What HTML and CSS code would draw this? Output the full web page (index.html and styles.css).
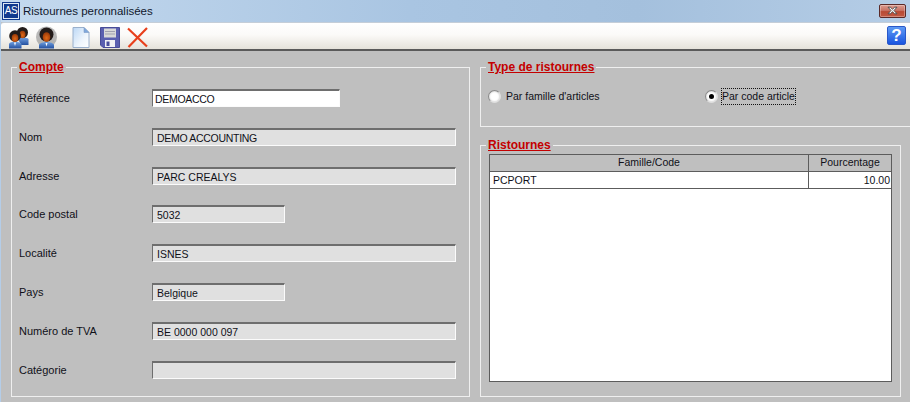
FILE: index.html
```html
<!DOCTYPE html>
<html lang="fr">
<head>
<meta charset="utf-8">
<title>Ristournes peronnalisées</title>
<link rel="stylesheet" href="styles.css">
</head>
<body>
<div class="window">
  <header class="titlebar">
    <span class="logo">AS</span>
    <span class="title">Ristournes peronnalisées</span>
    <span class="close">
      <svg width="13" height="9" viewBox="0 0 13 9"><path d="M2 1.2h2.3l2.2 2 2.2-2H11L8 4.500l3 3.300H8.700L6.500 5.800l-2.200 2H2l3-3.300z" fill="#f4f4f4" stroke="#4a4a4a" stroke-width=".9"/></svg>
    </span>
  </header>
  <nav class="toolbar">
    <svg class="ico people" width="21" height="23" viewBox="0 0 21 23">
      <defs>
        <radialGradient id="sk" cx=".5" cy=".6" r=".6"><stop offset="0" stop-color="#e06a18"/><stop offset="1" stop-color="#983808"/></radialGradient>
        <linearGradient id="bl" x1="0" y1="0" x2="0" y2="1"><stop offset="0" stop-color="#6f9fe0"/><stop offset="1" stop-color="#24509f"/></linearGradient>
      </defs>
      <path d="M10 13c1-2 9-2 10.500 0v6H13z" fill="url(#bl)"/>
      <circle cx="14.500" cy="6.500" r="5.500" fill="#231c1a"/>
      <ellipse cx="14.500" cy="8.500" rx="3" ry="3.800" fill="url(#sk)"/>
      <path d="M1 18c.5-3 11-3 12.500 0v4.500H1z" fill="url(#bl)"/>
      <circle cx="7" cy="10" r="5.800" fill="#231c1a"/>
      <ellipse cx="7" cy="12" rx="3.300" ry="4" fill="url(#sk)"/>
      <path d="M6 16.500l1 3.500 1-3.500z" fill="#fff"/>
    </svg>
    <svg class="ico person" width="21" height="23" viewBox="0 0 21 23">
      <circle cx="10.500" cy="11" r="10.500" fill="#8c8c8c" opacity=".6"/>
      <path d="M3 19c1-4 14-4 15 0v3.500H3z" fill="url(#bl)"/>
      <circle cx="10.500" cy="8.500" r="7" fill="#231c1a"/>
      <ellipse cx="10.500" cy="11" rx="3.800" ry="4.800" fill="url(#sk)"/>
      <path d="M9.500 17l1 3.500 1-3.500z" fill="#fff"/>
    </svg>
    <svg class="ico doc" width="18" height="21" viewBox="0 0 18 21">
      <defs><linearGradient id="dc" x1="0" y1="0" x2="1" y2="1"><stop offset="0" stop-color="#bcd8f6"/><stop offset=".6" stop-color="#eef5fc"/><stop offset="1" stop-color="#fff"/></linearGradient></defs>
      <path d="M1 .5h11l5 5v15H1z" fill="url(#dc)" stroke="#9ab0cc"/>
      <path d="M12 .5v5h5z" fill="#7fa8dc" stroke="#7d9cc8" stroke-width=".6"/>
    </svg>
    <svg class="ico save" width="20" height="21" viewBox="0 0 20 21">
      <path d="M.5.5h19v20H3l-2.500-2.500z" fill="#5a5fb0" stroke="#484c98"/>
      <rect x="4" y="1.500" width="12" height="9" fill="#d8d8d8"/>
      <path d="M5 4.500h10M5 7h10" stroke="#a0a0b0"/>
      <rect x="5" y="13" width="10" height="7" fill="#f0f0f4"/>
      <rect x="6.500" y="14.500" width="3" height="4.500" fill="#4a4f9c"/>
    </svg>
    <svg class="ico cross" width="21" height="21" viewBox="0 0 21 21">
      <path d="M1 1.500l19 18M20 1l-18.500 19" stroke="#e8401c" stroke-width="2.200" fill="none"/>
    </svg>
    <span class="help">?</span>
  </nav>
  <main class="content">
    <fieldset class="group compte">
      <legend>Compte</legend>
      <div class="field"><label>Référence</label><span class="box active medium tight">DEMOACCO</span></div>
      <div class="field"><label>Nom</label><span class="box tight">DEMO ACCOUNTING</span></div>
      <div class="field"><label>Adresse</label><span class="box">PARC CREALYS</span></div>
      <div class="field"><label>Code postal</label><span class="box short">5032</span></div>
      <div class="field"><label>Localité</label><span class="box">ISNES</span></div>
      <div class="field"><label>Pays</label><span class="box short">Belgique</span></div>
      <div class="field"><label>Numéro de TVA</label><span class="box">BE 0000 000 097</span></div>
      <div class="field"><label>Catégorie</label><span class="box"></span></div>
    </fieldset>
    <div class="side">
      <fieldset class="group type">
        <legend>Type de ristournes</legend>
        <div class="radios">
          <span class="radio-item first"><i class="radio"></i><span>Par famille d'articles</span></span>
          <span class="radio-item"><i class="radio on"></i><span class="focus">Par code article</span></span>
        </div>
      </fieldset>
      <fieldset class="group rist">
        <legend>Ristournes</legend>
        <div class="grid">
          <div class="row head"><span class="c1">Famille/Code</span><span class="c2">Pourcentage</span></div>
          <div class="row data"><span class="c1">PCPORT</span><span class="c2">10.00</span></div>
        </div>
      </fieldset>
    </div>
  </main>
</div>
</body>
</html>
```
FILE: styles.css
```css
* { box-sizing: border-box; }
html, body { margin: 0; height: 100%; }
body { font: 11px/13px "Liberation Sans", Arial, sans-serif; color: #101018; background: #bfbfbf; overflow: hidden; }
.window { width: 910px; height: 402px; display: flex; flex-direction: column; border-left: 1px solid #b4cde8; }

.titlebar { height: 22px; flex: none; display: flex; align-items: center; padding: 0 4px 0 2px; background: linear-gradient(90deg, #c4d9ee 0, #a9c5e2 45%, #a4c0dd 70%, #b5cde6 100%); }
.logo { width: 16px; height: 16px; background: #123a8e; border: 1px solid #dfe8f4; outline: 1px solid #123a8e; color: #fff; font: 10px/14px "Liberation Sans", sans-serif; text-align: center; letter-spacing: -.5px; }
.title { margin-left: 4px; font-size: 11.500px; color: #10182c; flex: 1; }
.close { width: 27px; height: 14px; margin-bottom: 1px; display: flex; align-items: center; justify-content: center; border: 1px solid #5b2a28; border-radius: 2px; background: linear-gradient(#dc9c90 0, #c87466 45%, #b84a34 55%, #c25a44 100%); box-shadow: inset 0 0 0 1px rgba(255,255,255,.3); }

.toolbar { height: 29px; flex: none; display: flex; align-items: center; padding: 3px 4px 0 7px; background: linear-gradient(#fff 0, #fbfaf8 45%, #e5e2da 100%); border-top: 1px solid #c5ced8; border-bottom: 2px solid #5a5a5a; border-top-left-radius: 3px; }
.ico { flex: none; display: block; }
.person { margin-left: 7px; }
.doc { margin-left: 15px; }
.save { margin-left: 10px; }
.cross { margin-left: 7px; }
.help { margin-left: auto; margin-bottom: 5px; width: 19px; height: 19px; background: linear-gradient(#5f9bf4, #1a55e0); border: 1px solid #2a58c8; border-radius: 2px; color: #fff; font: bold 17px/17px "Liberation Sans", sans-serif; text-align: center; }

.content { flex: 1; display: flex; gap: 10px; padding: 9px 0 5px 10px; min-height: 0; }
.group { margin: 0; padding: 0; min-width: 0; border: 1px solid #efefef; border-radius: 0; }
.group legend { margin-left: 5px; padding: 0 2px; font: bold 12px/14px "Liberation Sans", sans-serif; color: #c40000; text-decoration: underline; }

.compte { width: 459px; display: flex; flex-direction: column; padding: 15px 0 0; }
.field { display: flex; align-items: center; height: 18px; margin: 0 0 20.800px 7px; }
.field label { width: 133px; flex: none; padding-top: 1px; }
.box { width: 304px; height: 18px; display: block; padding: 2px 3px 2px 4px; background: #e0e0e0; border-style: solid; border-width: 2px 1px 1px 1px; border-color: #6e6e6e #fbfbfb #fbfbfb #6e6e6e; white-space: nowrap; font-size: 10.500px; line-height: 13px; }
.short { width: 133px; }
.medium { width: 188px; }
.active { background: #fff; padding-left: 2px; }
.tight { letter-spacing: -.3px; }

.side { flex: 1; display: flex; flex-direction: column; min-width: 0; }
.type { height: 67px; border-right: 0; }
.radios { display: flex; padding: 14px 0 0 7px; }
.radio-item { display: flex; align-items: center; height: 17px; }
.first { width: 217px; }
.radio { width: 13px; height: 13px; margin-right: 5px; border-radius: 50%; background: #fff; border: 1px solid #888; border-bottom-color: #ddd; border-right-color: #ddd; box-shadow: inset 0 0 2px #aaa; display: flex; align-items: center; justify-content: center; }
.radio.on::before { content: ""; width: 5px; height: 5px; border-radius: 50%; background: #000; }
.radio-item span { font-size: 10.500px; }
.radio-item .focus { outline: 1px dotted #111; padding: 1px 0; margin-left: -1px; }

.rist { flex: 1; margin: 11px 9px 0 0; min-height: 0; padding: 2px 0 14px; }
.grid { height: 100%; margin: 0 8px; background: #fff; border: 1px solid #5c5c5c; font-size: 10.500px; }
.row { display: flex; }
.head { height: 17px; background: #bfbfbf; border-bottom: 1px solid #5c5c5c; text-align: center; line-height: 15px; }
.data { height: 17px; border-bottom: 1px solid #5c5c5c; line-height: 16px; }
.c1 { flex: 1; padding: 0 3px; }
.data .c1 { text-align: left; }
.c2 { width: 83px; flex: none; border-left: 1px solid #5c5c5c; padding: 0 1px; }
.data .c2 { text-align: right; }
```
